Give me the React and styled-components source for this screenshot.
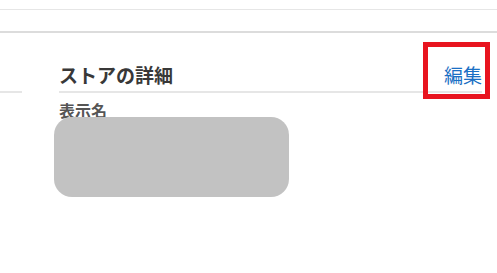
import React from "react";
import styled, { createGlobalStyle } from "styled-components";

const GlobalStyle = createGlobalStyle`
  html, body {
    margin: 0;
    padding: 0;
    background: #fff;
  }
  body {
    font-family: "Noto Sans CJK JP", "Noto Sans", sans-serif;
  }
`;

const Page = styled.div`
  position: relative;
  width: 497px;
  height: 273px;
  overflow: hidden;
  background: #fff;
`;

const TopBar = styled.div`
  height: 9px;
  border-bottom: 1px solid #e6e6e6;
`;

const SubBar = styled.div`
  height: 21px;
  border-bottom: 2px solid #dcdcdc;
`;

const Main = styled.div`
  display: flex;
  align-items: flex-start;
`;

const SideStub = styled.div`
  width: 22px;
  height: 58px;
  border-bottom: 2px solid #e6e6e6;
`;

const Content = styled.div`
  margin-left: 37px;
  width: 423px;
`;

const SectionHeader = styled.div`
  display: flex;
  justify-content: space-between;
  align-items: flex-end;
  padding-top: 29px;
  padding-bottom: 4px;
  border-bottom: 2px solid #e6e6e6;
`;

const Title = styled.h2`
  margin: 0;
  font-size: 19px;
  line-height: 25px;
  font-weight: 700;
  color: #383838;
`;

const EditLink = styled.a`
  font-size: 19px;
  line-height: 25px;
  color: #1a6fc4;
  text-decoration: none;
  cursor: pointer;
`;

const FieldLabel = styled.div`
  margin-top: 7px;
  font-size: 16px;
  line-height: 21px;
  font-weight: 700;
  color: #555;
`;

const Redaction = styled.div`
  position: absolute;
  left: 54px;
  top: 117px;
  width: 235px;
  height: 80px;
  border-radius: 18px;
  background: #c2c2c2;
`;

const Highlight = styled.div`
  position: absolute;
  left: 423px;
  top: 42px;
  width: 67px;
  height: 57px;
  box-sizing: border-box;
  border: 5px solid #e8141f;
`;

export default function App() {
  return (
    <Page>
      <GlobalStyle />
      <TopBar />
      <SubBar />
      <Main>
        <SideStub />
        <Content>
          <SectionHeader>
            <Title>ストアの詳細</Title>
            <EditLink>編集</EditLink>
          </SectionHeader>
          <FieldLabel>表示名</FieldLabel>
        </Content>
      </Main>
      <Redaction />
      <Highlight />
    </Page>
  );
}
